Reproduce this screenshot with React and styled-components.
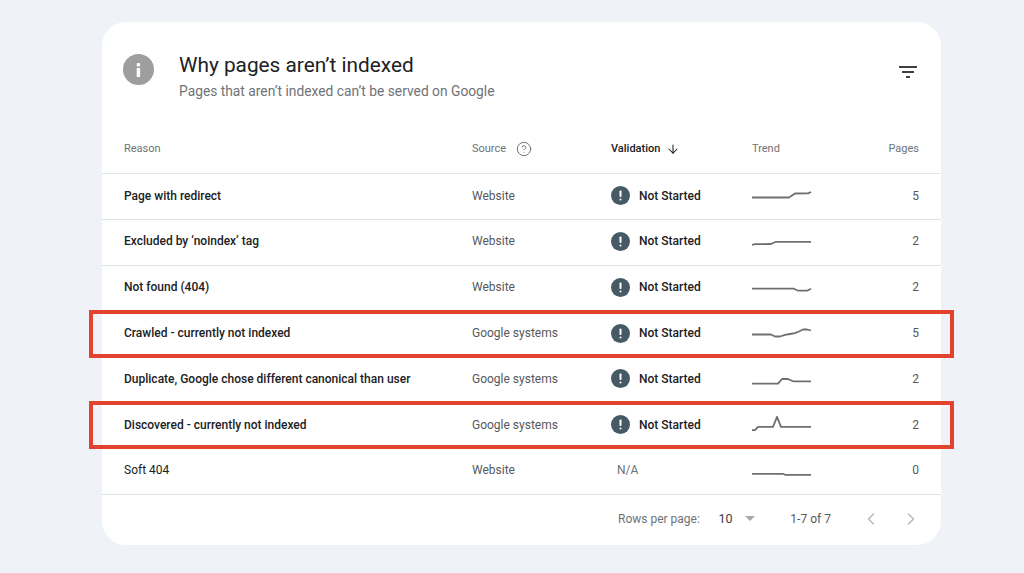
import React from 'react';
import styled, { createGlobalStyle } from 'styled-components';
import { ArrowDown, ChevronLeft, ChevronRight, CircleHelp } from 'lucide-react';

const GlobalStyle = createGlobalStyle`
	html, body {
		margin: 0;
		height: 100%;
		background: #eff3f8;
		font-family: Roboto, "Liberation Sans", sans-serif;
	}
`;

const Page = styled.div`
	width: 1024px;
	height: 573px;
	padding: 22px 83px 28px 102px;
	box-sizing: border-box;
	overflow: hidden;
`;

const Card = styled.section`
	height: 523px;
	background: #fff;
	border-radius: 24px;
	display: flex;
	flex-direction: column;
`;

const Header = styled.header`
	height: 106px;
	flex: none;
	box-sizing: border-box;
	padding: 31px 24px 0 21px;
	display: flex;
	align-items: flex-start;
`;

const InfoBadge = styled.div`
	width: 31px;
	height: 31px;
	margin-top: 1px;
	border-radius: 50%;
	background: #9e9e9e;
	flex: none;
	display: flex;
	align-items: center;
	justify-content: center;
`;

const Titles = styled.div`
	margin-left: 25px;
	flex: 1;
`;

const Title = styled.h1`
	margin: 0;
	font-size: 20.8px;
	line-height: 24px;
	font-weight: 400;
	color: #202124;
`;

const Subtitle = styled.p`
	margin: 4px 0 0;
	font-size: 13.8px;
	line-height: 20px;
	color: #6f7276;
`;

const FilterButton = styled.div`
	width: 18px;
	height: 14px;
	margin-top: 12px;
	color: #3c4043;
`;

const Grid = styled.div`
	display: grid;
	grid-template-columns: 348px 139px 141px 1fr 60px;
	align-items: center;
	padding: 0 22px;
	box-sizing: border-box;
`;

const HeadRow = styled(Grid)`
	height: 46px;
	flex: none;
	padding-bottom: 4px;
	font-size: 11px;
	color: #6f7276;
	border-bottom: 1.5px solid #e3e4e6;
`;

const HeadCell = styled.div`
	display: flex;
	align-items: center;
	gap: ${(p) => p.$gap || 0}px;
	font-weight: ${(p) => (p.$active ? 500 : 400)};
	color: ${(p) => (p.$active ? '#202124' : 'inherit')};
	justify-content: ${(p) => (p.$end ? 'flex-end' : 'flex-start')};
`;

const Row = styled(Grid)`
	position: relative;
	height: 45.8px;
	flex: none;
	padding-bottom: 1.5px;
	font-size: 12px;
	color: #55585c;
	border-bottom: 1px solid ${(p) => (p.$plain ? 'transparent' : '#e0e1e3')};

	&:last-of-type {
		border-bottom-color: #e0e1e3;
	}

	${(p) =>
		p.$flagged &&
		`
		&::after {
			content: '';
			position: absolute;
			inset: -1.5px -13px -1.5px -13px;
			border: 4px solid #e2432f;
			pointer-events: none;
		}
	`}
`;

const Reason = styled.div`
	font-weight: ${(p) => (p.$light ? 400 : 500)};
	color: #202124;
	white-space: nowrap;
`;

const Status = styled.div`
	display: flex;
	align-items: center;
	gap: 9px;
	font-weight: 500;
	color: #202124;
`;

const StatusDot = styled.span`
	width: 19px;
	height: 19px;
	border-radius: 50%;
	background: #455a64;
	display: flex;
	align-items: center;
	justify-content: center;
`;

const Empty = styled.div`
	padding-left: 6px;
	color: #6f7276;
`;

const Count = styled.div`
	text-align: right;
`;

const Spark = styled.svg`
	display: block;
	width: 60px;
	height: 20px;
	fill: none;
	stroke: #6d6f72;
	stroke-width: 1.8;
	stroke-linejoin: round;
`;

const Footer = styled.footer`
	flex: 1;
	display: flex;
	align-items: center;
	padding: 0 20px 2px 516px;
	font-size: 12px;
	color: #6f7276;
`;

const RowsLabel = styled.span`
	width: 101px;
	white-space: nowrap;
`;

const RowsValue = styled.span`
	width: 27px;
	color: #3c4043;
	font-size: 12.5px;
`;

const Caret = styled.span`
	width: 0;
	height: 0;
	border-left: 5.5px solid transparent;
	border-right: 5.5px solid transparent;
	border-top: 5.5px solid #a6a8ab;
`;

const RangeLabel = styled.span`
	margin-left: 35px;
	width: 71px;
	white-space: nowrap;
	color: #55585c;
`;

const Pager = styled.div`
	display: flex;
	gap: 20px;
	color: #b4b6b9;
`;

const InfoGlyph = () => (
	<svg width="31" height="31" viewBox="0 0 31 31" aria-hidden="true">
		<rect x="13.7" y="9" width="3.4" height="3.4" rx="1" fill="#fff" />
		<rect x="13.7" y="14" width="3.4" height="9" rx="0.6" fill="#fff" />
	</svg>
);

const BangGlyph = () => (
	<svg width="19" height="19" viewBox="0 0 19 19" aria-hidden="true">
		<rect x="8.5" y="4.5" width="2" height="6.5" rx="0.8" fill="#fff" />
		<rect x="8.5" y="12.4" width="2" height="2" rx="1" fill="#fff" />
	</svg>
);

const rows = [
	{ reason: 'Page with redirect', source: 'Website', pages: 5, line: '0,11.5 37,11.5 43,7.5 56,7.3 59,6' },
	{ reason: 'Excluded by ‘noindex’ tag', source: 'Website', pages: 2, line: '0,14 3,13.2 19,13 24,10.8 59,10.8' },
	{ reason: 'Not found (404)', source: 'Website', pages: 2, line: '0,11.7 42,11.7 45,13.3 48,13.7 55,13.7 59,11.7' },
	{ reason: 'Crawled - currently not indexed', source: 'Google systems', pages: 5, flagged: true, line: '0,11.5 19,11.5 23,13.5 28,13.5 33,11.8 38,11 43,10.2 47,8.5 51,6.5 55,6.5 59,7.5' },
	{ reason: 'Duplicate, Google chose different canonical than user', source: 'Google systems', pages: 2, line: '0,14.7 26,14.7 30,10 36,10 41,12.3 59,12.3' },
	{ reason: 'Discovered - currently not indexed', source: 'Google systems', pages: 2, flagged: true, line: '0,15.2 3,15.2 6,11.8 21,11.8 25,1.8 29,11.8 59,11.8' },
	{ reason: 'Soft 404', source: 'Website', pages: 0, line: '0,13.8 31,13.8 33,14.8 59,14.8', na: true },
];

export default function App() {
	return (
		<Page>
			<GlobalStyle />
			<Card>
				<Header>
					<InfoBadge>
						<InfoGlyph />
					</InfoBadge>
					<Titles>
						<Title>Why pages aren’t indexed</Title>
						<Subtitle>Pages that aren’t indexed can’t be served on Google</Subtitle>
					</Titles>
					<FilterButton>
						<svg width="18" height="14" viewBox="0 0 18 14" aria-hidden="true">
							<path d="M0 1h18M3 6h12M7 11h4" stroke="currentColor" strokeWidth="2" />
						</svg>
					</FilterButton>
				</Header>
				<HeadRow>
					<HeadCell>Reason</HeadCell>
					<HeadCell $gap={10}>
						Source
						<CircleHelp size={16} strokeWidth={1.5} />
					</HeadCell>
					<HeadCell $active $gap={6}>
						Validation
						<ArrowDown size={14} strokeWidth={1.8} />
					</HeadCell>
					<HeadCell>Trend</HeadCell>
					<HeadCell $end>Pages</HeadCell>
				</HeadRow>
				{rows.map((row, i) => (
					<Row key={row.reason} $flagged={row.flagged} $plain={row.flagged || (rows[i + 1] && rows[i + 1].flagged)}>
						<Reason $light={row.na}>{row.reason}</Reason>
						<div>{row.source}</div>
						{row.na ? (
							<Empty>N/A</Empty>
						) : (
							<Status>
								<StatusDot>
									<BangGlyph />
								</StatusDot>
								Not Started
							</Status>
						)}
						<Spark viewBox="0 0 60 20">
							<polyline points={row.line} />
						</Spark>
						<Count>{row.pages}</Count>
					</Row>
				))}
				<Footer>
					<RowsLabel>Rows per page:</RowsLabel>
					<RowsValue>10</RowsValue>
					<Caret />
					<RangeLabel>1-7 of 7</RangeLabel>
					<Pager>
						<ChevronLeft size={20} strokeWidth={1.6} />
						<ChevronRight size={20} strokeWidth={1.6} />
					</Pager>
				</Footer>
			</Card>
		</Page>
	);
}
